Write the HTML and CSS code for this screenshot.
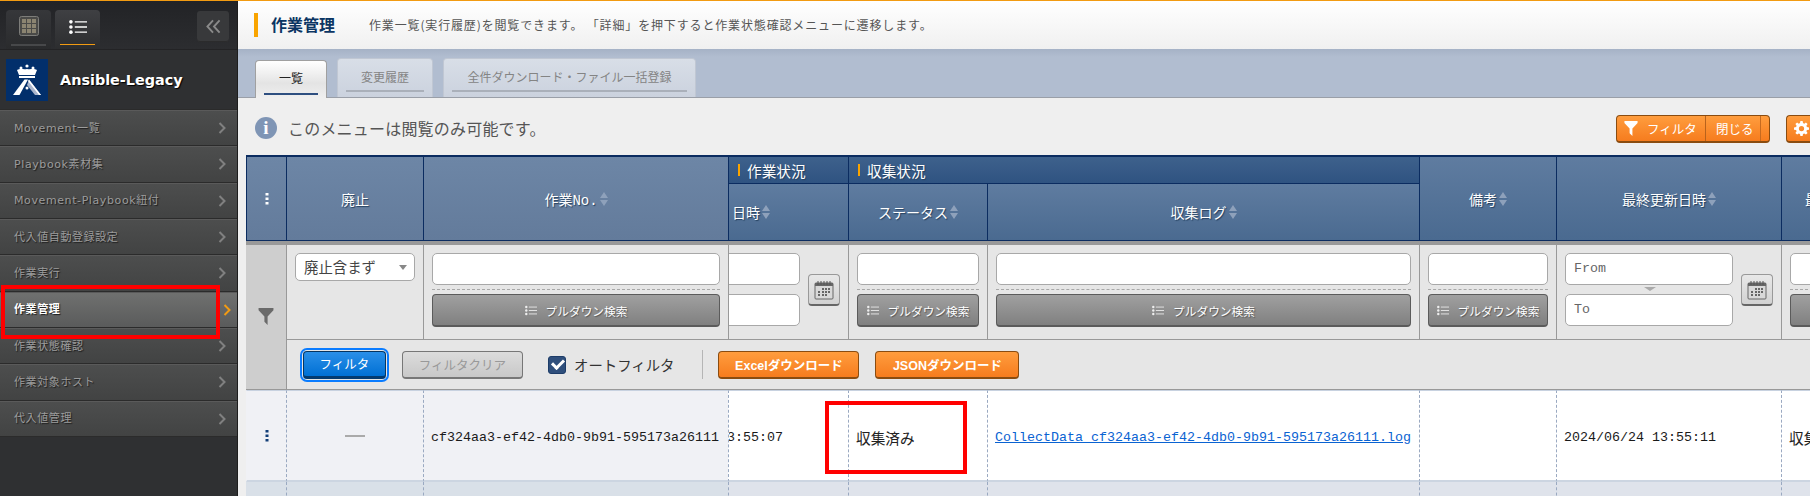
FILE: index.html
```html
<!DOCTYPE html>
<html lang="ja">
<head>
<meta charset="utf-8">
<title>作業管理</title>
<link rel="stylesheet" href="styles.css">
</head>
<body>
<svg class="sprite" aria-hidden="true">
  <symbol id="chev" viewBox="0 0 8 12"><path d="M1.500 1 6.500 6 1.500 11" fill="none" stroke="currentColor" stroke-width="2"/></symbol>
  <symbol id="list" viewBox="0 0 14 12"><circle cx="1.500" cy="2" r="1.400" fill="currentColor"/><circle cx="1.500" cy="6" r="1.400" fill="currentColor"/><circle cx="1.500" cy="10" r="1.400" fill="currentColor"/><path d="M4.500 2H14M4.500 6H14M4.500 10H14" stroke="currentColor" stroke-width="1" fill="none"/></symbol>
  <symbol id="funnel" viewBox="0 0 14 16"><path d="M0 0h14v2L8.500 8v8L5.500 13V8L0 2z" fill="currentColor"/></symbol>
  <symbol id="kebab" viewBox="0 0 4 12"><path d="M.5 0h3v2.500h-3zM.5 4.500h3V7h-3zM.5 9h3v2.500h-3z" fill="currentColor"/></symbol>
  <symbol id="cal" viewBox="0 0 20 20"><path d="M2 3h16a1 1 0 0 1 1 1v14a1 1 0 0 1-1 1H2a1 1 0 0 1-1-1V4a1 1 0 0 1 1-1z" fill="#d8d8d8" stroke="#666"/><path d="M1 3h18v3H1z" fill="#666"/><path d="M4 1v4M7 1v4M10 1v4M13 1v4M16 1v4" stroke="#555"/><path d="M8 8h2v2H8zM11 8h2v2h-2zM14 8h2v2h-2zM4 11h2v2H4zM8 11h2v2H8zM11 11h2v2h-2zM14 11h2v2h-2zM4 14h2v2H4zM8 14h2v2H8zM11 14h2v2h-2z" fill="#666"/></symbol>
</svg>

<div class="app">
  <aside class="side">
    <div class="side-top">
      <button class="mode">
        <svg class="grid-icon" viewBox="0 0 20 20"><rect x=".5" y=".5" width="19" height="19" rx="2" fill="#4a4a48" stroke="#7d7d7a"/><path d="M3 3h4v4H3zM8 3h4v4H8zM13 3h4v4h-4zM3 8h4v4H3zM8 8h4v4H8zM13 8h4v4h-4zM3 13h4v4H3zM8 13h4v4H8zM13 13h4v4h-4z" fill="#8b8471"/></svg>
      </button>
      <button class="mode mode-on">
        <svg class="list-icon"><use href="#list"/></svg>
      </button>
      <button class="collapse">
        <svg viewBox="0 0 16 16" class="collapse-icon"><path d="M7.500 1.500 1.500 8l6 6.500M14.500 1.500 8.500 8l6 6.500" fill="none" stroke="#8a8a8a" stroke-width="2"/></svg>
      </button>
    </div>
    <div class="brand">
      <svg class="logo" viewBox="0 0 42 42">
        <rect width="42" height="42" fill="#022f6b"/>
        <circle cx="21" cy="7" r="1.600" fill="#fff"/><circle cx="15" cy="9" r="1.500" fill="#fff"/><circle cx="27" cy="9" r="1.500" fill="#fff"/>
        <path d="M11 11c4-2 6 0 10-1 4 1 6-1 10 1l-2 5H13z" fill="#fff"/>
        <path d="M13 17h16v2H13z" fill="#fff"/>
        <path d="M18.500 20.500h3.500L13.500 36H7z" fill="#fff"/>
        <path d="M23 20.500 35 36h-6l-8-10z" fill="#a9b5cc"/>
        <path d="M23 20.500 35 36h-2L22 22z" fill="#fff"/>
        <circle cx="21" cy="29" r="1.500" fill="#fff"/>
      </svg>
      <span class="brand-name">Ansible-Legacy</span>
    </div>
    <nav class="menu">
      <a class="item">Movement一覧<svg class="chev"><use href="#chev"/></svg></a>
      <a class="item">Playbook素材集<svg class="chev"><use href="#chev"/></svg></a>
      <a class="item">Movement-Playbook紐付<svg class="chev"><use href="#chev"/></svg></a>
      <a class="item">代入値自動登録設定<svg class="chev"><use href="#chev"/></svg></a>
      <a class="item">作業実行<svg class="chev"><use href="#chev"/></svg></a>
      <a class="item item-on">作業管理<svg class="chev"><use href="#chev"/></svg></a>
      <a class="item">作業状態確認<svg class="chev"><use href="#chev"/></svg></a>
      <a class="item">作業対象ホスト<svg class="chev"><use href="#chev"/></svg></a>
      <a class="item">代入値管理<svg class="chev"><use href="#chev"/></svg></a>
    </nav>
  </aside>

  <main class="main">
    <header class="head">
      <h1 class="title">作業管理</h1>
      <p class="desc">作業一覧(実行履歴)を閲覧できます。 「詳細」を押下すると作業状態確認メニューに遷移します。</p>
    </header>
    <div class="tabs">
      <div class="tab tab-on"><span>一覧</span></div>
      <div class="tab tab-2"><span>変更履歴</span></div>
      <div class="tab tab-3"><span>全件ダウンロード・ファイル一括登録</span></div>
    </div>
    <div class="content">
      <div class="info">
        <span class="info-icon">i</span>
        <span class="info-text">このメニューは閲覧のみ可能です。</span>
        <div class="tools">
          <div class="toggle">
            <svg class="toggle-funnel"><use href="#funnel"/></svg>
            <span class="toggle-a">フィルタ</span>
            <span class="toggle-b">閉じる</span>
          </div>
          <div class="gear">
            <svg class="gear-icon" viewBox="0 0 16 16"><path d="M6.800 0h2.400l.4 2.200 1.300.6L12.700 1.500l1.800 1.800-1.300 1.800.6 1.300 2.200.4v2.400l-2.200.4-.6 1.300 1.300 1.800-1.800 1.800-1.800-1.300-1.300.6-.4 2.200H6.800l-.4-2.200-1.300-.6-1.800 1.300-1.800-1.800 1.300-1.800-.6-1.300L0 9.200V6.800l2.200-.4.600-1.300-1.300-1.800 1.800-1.800 1.800 1.300 1.300-.6zM8 5.200a2.800 2.800 0 1 0 0 5.600 2.800 2.800 0 0 0 0-5.600z" fill="#fff" fill-rule="evenodd"/></svg>
          </div>
        </div>
      </div>

      <div class="table">
        <div class="th th-l span2"><svg class="kebab"><use href="#kebab"/></svg></div>
        <div class="th th-l span2">廃止</div>
        <div class="th th-l span2">作業No.<i class="sort"></i></div>
        <div class="group"><i class="mark"></i>作業状況</div>
        <div class="group group-wide"><i class="mark"></i>収集状況</div>
        <div class="th th-s span2">備考<i class="sort"></i></div>
        <div class="th th-s span2">最終更新日時<i class="sort"></i></div>
        <div class="th th-s span2 th-cut">最</div>
        <div class="th th-s th-date">日時<i class="sort"></i></div>
        <div class="th th-s">ステータス<i class="sort"></i></div>
        <div class="th th-s">収集ログ<i class="sort"></i></div>

        <div class="f-side"><svg class="f-funnel"><use href="#funnel"/></svg></div>
        <div class="fc"><div class="select">廃止含まず<i class="caret"></i></div></div>
        <div class="fc">
          <div class="input"></div><div class="dash"></div>
          <div class="pull"><svg class="pull-icon"><use href="#list"/></svg>プルダウン検索</div>
        </div>
        <div class="fc fc-date">
          <div class="date-stack"><div class="input"></div><div class="input input-to"></div></div>
          <div class="calbtn"><svg><use href="#cal"/></svg></div>
        </div>
        <div class="fc">
          <div class="input"></div><div class="dash"></div>
          <div class="pull"><svg class="pull-icon"><use href="#list"/></svg>プルダウン検索</div>
        </div>
        <div class="fc">
          <div class="input"></div><div class="dash"></div>
          <div class="pull"><svg class="pull-icon"><use href="#list"/></svg>プルダウン検索</div>
        </div>
        <div class="fc">
          <div class="input"></div><div class="dash"></div>
          <div class="pull"><svg class="pull-icon"><use href="#list"/></svg>プルダウン検索</div>
        </div>
        <div class="fc fc-date">
          <div class="date-stack">
            <div class="input">From</div>
            <i class="range-mark"></i>
            <div class="input input-to">To</div>
          </div>
          <div class="calbtn"><svg><use href="#cal"/></svg></div>
        </div>
        <div class="fc">
          <div class="input"></div><div class="dash"></div>
          <div class="pull"><svg class="pull-icon"><use href="#list"/></svg>プルダウン検索</div>
        </div>

        <div class="actions">
          <div class="btn btn-blue">フィルタ</div>
          <div class="btn btn-clear">フィルタクリア</div>
          <label class="auto"><i class="check"></i>オートフィルタ</label>
          <i class="sep"></i>
          <div class="btn btn-orange btn-excel">Excelダウンロード</div>
          <div class="btn btn-orange btn-json">JSONダウンロード</div>
        </div>

        <div class="td td-l td-c td-first"><svg class="kebab kebab-blue"><use href="#kebab"/></svg></div>
        <div class="td td-l td-c"><i class="dashmark"></i></div>
        <div class="td td-l">cf324aa3-ef42-4db0-9b91-595173a26111</div>
        <div class="td td-date">13:55:07</div>
        <div class="td td-jp">収集済み</div>
        <div class="td"><a class="link">CollectData_cf324aa3-ef42-4db0-9b91-595173a26111.log</a></div>
        <div class="td"></div>
        <div class="td">2024/06/24 13:55:11</div>
        <div class="td td-jp">収集済み</div>

        <div class="foot foot-l td-first"></div><div class="foot foot-l"></div><div class="foot foot-l"></div>
        <div class="foot"></div><div class="foot"></div><div class="foot"></div><div class="foot"></div><div class="foot"></div><div class="foot"></div>
      </div>
    </div>
  </main>
</div>
<div class="mark-box mark-menu"></div>
<div class="mark-box mark-status"></div>
</body>
</html>
```

FILE: styles.css
```css
* { box-sizing: border-box; }
html, body { margin: 0; height: 496px; overflow: hidden; }
body {
  position: relative;
  font-family: "Liberation Mono", "Noto Sans CJK JP", monospace;
  font-size: 13.33px;
  color: #111;
  background: #efefef;
}
.sprite { display: none; }
.app { display: flex; height: 496px; border-top: 1px solid #f29b12; }

/* sidebar */
.side { width: 238px; flex: none; background: #2f3032; border-right: 1px solid #1d1d1d; display: flex; flex-direction: column; }
.side-top {
  height: 49px; display: flex; align-items: flex-end; padding-left: 6px;
  background: linear-gradient(#222326, #2c2d30);
  border-bottom: 1px solid #232325;
}
.mode {
  width: 45px; height: 39px; margin-right: 4px; padding: 6px 0 0; border: 0; border-radius: 4px 4px 0 0;
  background: linear-gradient(#36373a, #2a2b2d); display: flex; justify-content: center;
  position: relative;
}
.mode::after { content: ""; position: absolute; left: 5px; right: 5px; bottom: 3px; height: 2px; background: #47484a; }
.mode-on { background: linear-gradient(#3f4043, #2c2d2f); }
.mode-on::after { background: #f29b12; height: 1px; bottom: 4px; }
.grid-icon { width: 20px; height: 20px; }
.list-icon { width: 18px; height: 16px; margin-top: 3px; color: #fff; }
.collapse {
  width: 32px; height: 31px; margin: 0 8px 7px auto; padding: 0; border: 0; border-radius: 3px;
  background: #38393b; display: flex; align-items: center; justify-content: center;
  box-shadow: inset 0 -1px 0 #2b2b2c;
}
.collapse-icon { width: 15px; height: 15px; }
.brand { height: 59px; display: flex; align-items: center; padding-left: 6px; }
.logo { width: 42px; height: 42px; flex: none; }
.brand-name {
  margin-left: 12px; font: bold 14.4px "DejaVu Sans", sans-serif; color: #fff; text-shadow: 1px 1px 1px #000;
}
.menu { display: flex; flex-direction: column; }
.item {
  height: 36.33px; display: flex; align-items: center; padding: 0 0 2px 14px;
  font: 11px "DejaVu Sans", "Noto Sans CJK JP", sans-serif; letter-spacing: .6px; color: #9c9c9c;
  text-shadow: 1px 1px 1px #1c1c1c;
  background: linear-gradient(#4d4e4e, #424343);
  border-top: 1px solid #2b2b2b; box-shadow: inset 0 1px 0 #5a5a5a;
  position: relative;
}
.item:last-child { border-bottom: 1px solid #2b2b2b; height: 37.33px; }
.item-on { background: linear-gradient(#707170, #5a5b5b); color: #fff; font-weight: bold; }
.chev { position: absolute; right: 11px; top: 12px; width: 8px; height: 12px; color: #808080; }
.item-on .chev { color: #f29b12; right: 6px; }

/* main column */
.main { flex: 1; min-width: 0; display: flex; flex-direction: column; overflow: hidden; }
.head {
  height: 48px; flex: none; display: flex; align-items: center; padding-left: 16px;
  background: linear-gradient(#fff, #f0f0f0);
}
.title {
  margin: 0; height: 24px; border-left: 4px solid #f9a400; padding-left: 13px;
  font: bold 16px/22px "Noto Sans CJK JP", sans-serif; color: #0b3563;
}
.desc { margin: -2px 0 0 34px; font: 12px "Noto Sans CJK JP", sans-serif; letter-spacing: .85px; color: #555; }
.tabs {
  height: 49px; flex: none; display: flex; align-items: flex-end; gap: 10px; padding-left: 17px;
  background: linear-gradient(#a5b2c6, #b1bdd0 8px);
  border-bottom: 1px solid #9a9fa8;
}
.tab {
  height: 39px; padding: 0 8px; border-radius: 4px 4px 0 0; background: linear-gradient(#d8dee7, #cbd2de);
  border: 1px solid #c0c7d3; border-bottom: 0; display: flex;
  font: 12px "Noto Sans CJK JP", sans-serif; color: #848484;
}
.tab span { flex: 1; text-align: center; padding-top: 9px; height: 33px; border-bottom: 2px solid #aab0ba; }
.tab-on { width: 72px; height: 38px; margin-bottom: -1px; background: linear-gradient(#fff, #e4e4e4 60%, #efefef); border-color: #a0a0a0; color: #222; }
.tab-on span { height: 34px; padding-top: 8px; border-bottom: 2px solid #2e4f80; }
.tab-2 { width: 96px; }
.tab-3 { width: 253px; }

.content { flex: 1; padding: 0 0 0 8px; min-height: 0; }
.info { height: 57px; display: flex; align-items: center; padding-left: 9px; }
.info-icon {
  width: 22px; height: 22px; border-radius: 50%; background: #7f95b5; color: #fff; flex: none; margin-top: 2px;
  font: bold 19px/22px "Liberation Serif", serif; text-align: center;
}
.info-text { margin: 2px 0 0 11px; font: 16px "Noto Sans CJK JP", sans-serif; letter-spacing: .2px; color: #555; }
.tools { margin-left: auto; display: flex; gap: 16px; margin-top: 5px; }
.toggle, .gear {
  height: 28px; border: 1px solid #8a4c10; border-bottom-width: 2px; border-radius: 4px;
  background: linear-gradient(#ff9d3e, #f67c1e); color: #fff; display: flex; align-items: center;
}
.toggle { width: 154px; font: 12.5px "Noto Sans CJK JP", sans-serif; padding-left: 7px; }
.toggle-funnel { width: 14px; height: 15px; color: #fff; }
.toggle-a { margin-left: 9px; width: 59px; height: 100%; line-height: 25px; border-right: 1px solid #b8621c; }
.toggle-b { width: 55px; height: 100%; line-height: 25px; padding-left: 10px; border-right: 1px solid #c56a20; }
.gear { width: 24px; padding-left: 7px; border-right: 0; border-radius: 4px 0 0 4px; }
.gear-icon { width: 15px; height: 15px; flex: none; }

/* table */
.table {
  display: grid;
  grid-template-columns: 40px 137px 305px 120px 139px 432px 137px 225px 200px;
  grid-template-rows: 29px 57px 99px 50px 92px 40px;
  width: 1735px;
}
.th, .group { border-left: 1px solid #0b2c60; color: #fff; text-shadow: 1px 1px 1px #24405f; font-size: 14px; }
.th {
  display: flex; align-items: center; justify-content: center; border-bottom: 1px solid #0b2c60;
}
.span2 { grid-row: span 2; border-top: 2px solid #0b2c60; }
.th-l { background: linear-gradient(#6d86a6, #637b9b); }
.th-s { background: linear-gradient(#5f7ca0, #4a6a90); }
.th-cut { justify-content: flex-start; padding-left: 23px; }
.th-date { justify-content: flex-end; padding-right: 78px; overflow: hidden; }
.group {
  border-top: 2px solid #0b2c60; border-bottom: 1px solid #0b2c60; display: flex; align-items: center; padding-left: 9px;
  background: linear-gradient(#3e618c, #2f5381); font-size: 14.67px;
}
.group-wide { grid-column: span 2; }
.mark { width: 2px; height: 12px; background: #f9a400; margin-right: 7px; }
.sort { display: inline-block; width: 8px; height: 14px; margin-left: 2px; position: relative; }
.sort::before, .sort::after { content: ""; position: absolute; left: 0; border: 4px solid transparent; }
.sort::before { top: 0; border-bottom: 6px solid #8ea1bb; border-top: 0; }
.sort::after { bottom: 0; border-top: 6px solid #8ea1bb; border-bottom: 0; }
.kebab { width: 4px; height: 12px; color: #fff; }
.kebab-blue { color: #123f78; }

.f-side {
  grid-row: span 2; background: #cecece; border-top: 4px solid #999; border-bottom: 1px solid #999;
  display: flex; align-items: center; justify-content: center; padding-bottom: 2px;
}
.f-funnel { width: 16px; height: 17px; color: #6a6a6a; }
.fc {
  background: #e6e6e6; border-top: 4px solid #999; border-left: 1px solid #999; border-bottom: 1px solid #999;
  padding: 8px 8px 0;
}
.input {
  height: 32px; background: #fff; border: 1px solid #a8a8a8; border-radius: 5px; padding: 7px 8px;
  font-size: 13.33px; line-height: 16px; color: #666;
}
.dash { border-top: 1px dashed #a8a8a8; margin: 4px 0; }
.pull {
  height: 33px; border: 1px solid #5b5b5b; border-bottom-width: 2px; border-radius: 4px;
  background: linear-gradient(#a0a0a0, #808080); color: #fff; text-shadow: 1px 1px 1px #555;
  display: flex; align-items: center; justify-content: center;
  font: 11.7px "Noto Sans CJK JP", sans-serif;
}
.pull-icon { width: 12px; height: 11px; margin-right: 9px; color: #eee; }
.select {
  height: 28px; background: #fff; border: 1px solid #a8a8a8; border-radius: 5px; padding-left: 8px;
  font: 14.4px/25px "Noto Sans CJK JP", sans-serif; color: #444; position: relative;
}
.caret { position: absolute; right: 7px; top: 11px; border: 4px solid transparent; border-top: 5px solid #888; border-bottom: 0; }
.fc-date { display: flex; justify-content: flex-end; gap: 8px; overflow: hidden; }
.date-stack { flex: none; width: 168px; position: relative; }
.input-to { margin-top: 9px; }
.range-mark { position: absolute; left: 79px; top: 34px; border: 6px solid transparent; border-top: 4px solid #aaa; border-bottom: 0; }
.calbtn {
  width: 32px; height: 32px; margin-top: 21px; flex: none; border: 1px solid #999; border-bottom: 2px solid #666; border-radius: 4px;
  background: linear-gradient(#e8e8e8, #d2d2d2); display: flex; align-items: center; justify-content: center;
}
.calbtn svg { width: 20px; height: 20px; }

.actions {
  grid-column: 2 / -1; background: #e6e6e6; border-left: 1px solid #999; border-bottom: 1px solid #999;
  display: flex; align-items: center; padding-left: 16px;
}
.btn {
  height: 28px; border-radius: 4px; display: flex; align-items: center; justify-content: center; flex: none;
  font: 12.5px "Noto Sans CJK JP", sans-serif; color: #fff;
}
.btn-blue {
  width: 83px; border: 1px solid #06345f; border-bottom: 3px solid #023a70;
  background: linear-gradient(#2a8fe8, #0070d4); box-shadow: 0 0 0 1px #e6e6e6, 0 0 0 3px #0a7cff;
}
.btn-clear { width: 121px; margin-left: 16px; border: 1px solid #777; border-bottom-width: 2px; background: linear-gradient(#dcdcdc, #c8c8c8); color: #999; }
.auto { display: flex; align-items: center; margin-left: 25px; font: 14.4px "Noto Sans CJK JP", sans-serif; color: #333; }
.check {
  width: 18px; height: 18px; margin-right: 8px; border-radius: 3px; background: #2f4f7c; border: 1px solid #1d3c68; position: relative;
}
.check::after {
  content: ""; position: absolute; left: 3px; top: 2px; width: 9px; height: 5px;
  border-left: 3px solid #fff; border-bottom: 3px solid #fff; transform: rotate(-45deg);
}
.sep { width: 1px; height: 29px; background: #b5b5b5; margin: 0 15px 0 28px; }
.btn-orange {
  border: 1px solid #8a4c10; border-bottom-width: 2px; background: linear-gradient(#ff9d3e, #f67c1e);
  font: bold 12.5px "Liberation Sans", "Noto Sans CJK JP", sans-serif;
}
.btn-excel { width: 141px; }
.btn-json { width: 144px; margin-left: 16px; }

.td {
  background: #fff; border-left: 1px dashed #9aa9c1; border-top: 1px solid #c8d2e0; border-bottom: 2px solid #ccd5e1;
  display: flex; align-items: center; padding: 3px 7px 0; white-space: nowrap; overflow: hidden; color: #1a1a1a;
}
.td-jp { font-size: 14.67px; color: #222; }
.td-l { background: #f0f1f5; }
.td-c { justify-content: center; padding: 0; }
.td-date { justify-content: flex-end; padding-right: 65px; }
.dashmark { width: 20px; height: 2px; background: #aaa; }
.link { color: #0a63d2; text-decoration: underline; }
.foot { background: #dfe3eb; border-left: 1px dashed #9aa9c1; }
.foot-l { background: #d9e0e8; }
.td-first { border-left-color: transparent; }

/* annotation frames */
.mark-box { position: absolute; border: 4px solid #f00; pointer-events: none; }
.mark-menu { left: 1px; top: 285px; width: 219px; height: 54px; }
.mark-status { left: 825px; top: 401px; width: 142px; height: 73px; }
```
